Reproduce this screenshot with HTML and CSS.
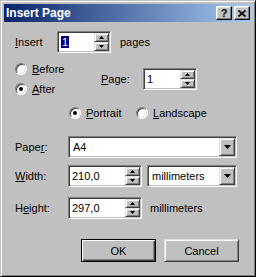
FILE: index.html
```html
<!DOCTYPE html>
<html lang="en">
<head>
    <meta charset="UTF-8">
    <title>Insert Page</title>
    <link rel="stylesheet" href="styles.css">
</head>
<body>
    <div class="window">
        <div class="titlebar">
            <span class="title">Insert Page</span>
            <div class="caption-buttons">
                <span class="cap-btn help">?</span>
                <span class="cap-btn close">
                    <svg width="8" height="7" viewBox="0 0 8 7"><path d="M0.5 0.5 L7.5 6.5 M7.5 0.5 L0.5 6.5" stroke="#000" stroke-width="1.6"/></svg>
                </span>
            </div>
        </div>

        <div class="client">
            <div class="row row-insert">
                <span class="label label-insert"><u>I</u>nsert</span>
                <div class="field spin small">
                    <span class="value"><span class="selected">1</span></span>
                    <div class="spinner">
                        <span class="spin-btn"><svg width="5" height="3" viewBox="0 0 5 3"><path d="M2.5 0 L5 3 L0 3 Z" fill="#000"/></svg></span>
                        <span class="spin-btn"><svg width="5" height="3" viewBox="0 0 5 3"><path d="M0 0 L5 0 L2.5 3 Z" fill="#000"/></svg></span>
                    </div>
                </div>
                <span class="unit-text pages">pages</span>
            </div>

            <div class="row row-position">
                <div class="radio-group">
                    <div class="radio-item"><span class="radio"></span><span><u>B</u>efore</span></div>
                    <div class="radio-item"><span class="radio checked"></span><span><u>A</u>fter</span></div>
                </div>
                <span class="label label-page"><u>P</u>age:</span>
                <div class="field spin small">
                    <span class="value">1</span>
                    <div class="spinner">
                        <span class="spin-btn"><svg width="5" height="3" viewBox="0 0 5 3"><path d="M2.5 0 L5 3 L0 3 Z" fill="#000"/></svg></span>
                        <span class="spin-btn"><svg width="5" height="3" viewBox="0 0 5 3"><path d="M0 0 L5 0 L2.5 3 Z" fill="#000"/></svg></span>
                    </div>
                </div>
            </div>

            <div class="row row-orientation">
                <div class="radio-item portrait"><span class="radio checked"></span><span><u>P</u>ortrait</span></div>
                <div class="radio-item"><span class="radio"></span><span><u>L</u>andscape</span></div>
            </div>

            <div class="row row-paper">
                <span class="label label-wide">Pape<u>r</u>:</span>
                <div class="field combo paper">
                    <span class="value">A4</span>
                    <span class="drop-btn"><svg width="7" height="4" viewBox="0 0 7 4"><path d="M0 0 L7 0 L3.5 4 Z" fill="#000"/></svg></span>
                </div>
            </div>

            <div class="row row-width">
                <span class="label label-wide"><u>W</u>idth:</span>
                <div class="field spin medium">
                    <span class="value">210,0</span>
                    <div class="spinner">
                        <span class="spin-btn"><svg width="5" height="3" viewBox="0 0 5 3"><path d="M2.5 0 L5 3 L0 3 Z" fill="#000"/></svg></span>
                        <span class="spin-btn"><svg width="5" height="3" viewBox="0 0 5 3"><path d="M0 0 L5 0 L2.5 3 Z" fill="#000"/></svg></span>
                    </div>
                </div>
                <div class="field combo units">
                    <span class="value">millimeters</span>
                    <span class="drop-btn"><svg width="7" height="4" viewBox="0 0 7 4"><path d="M0 0 L7 0 L3.5 4 Z" fill="#000"/></svg></span>
                </div>
            </div>

            <div class="row row-height">
                <span class="label label-wide">H<u>e</u>ight:</span>
                <div class="field spin medium">
                    <span class="value">297,0</span>
                    <div class="spinner">
                        <span class="spin-btn"><svg width="5" height="3" viewBox="0 0 5 3"><path d="M2.5 0 L5 3 L0 3 Z" fill="#000"/></svg></span>
                        <span class="spin-btn"><svg width="5" height="3" viewBox="0 0 5 3"><path d="M0 0 L5 0 L2.5 3 Z" fill="#000"/></svg></span>
                    </div>
                </div>
                <span class="unit-text">millimeters</span>
            </div>

            <div class="row row-buttons">
                <button class="btn default">OK</button>
                <button class="btn">Cancel</button>
            </div>
        </div>
    </div>
</body>
</html>
```

FILE: styles.css
```css
:root {
    --face: #c0c0c0;
    --light: #dfdfdf;
    --shadow: #808080;
    --dark: #404040;
    --highlight: #000080;
}

* {
    margin: 0;
    padding: 0;
    box-sizing: border-box;
}

body {
    margin: 0;
    width: 256px;
    height: 277px;
    font-family: 'Liberation Sans', Arial, sans-serif;
    font-size: 11px;
    color: #000;
    background: var(--face);
}

u {
    text-decoration: underline;
    text-underline-offset: 1px;
}

.window {
    width: 256px;
    height: 277px;
    padding: 3px;
    background: var(--face);
    border: 1px solid;
    border-color: var(--face) #000 #000 var(--face);
    box-shadow: inset 1px 1px #fff, inset -1px -1px var(--shadow);
}

/* title bar */
.titlebar {
    height: 18px;
    display: flex;
    align-items: center;
    justify-content: space-between;
    padding: 0 2px;
    background: linear-gradient(to right, #0a246a, #a6caf0);
}

.title {
    color: #fff;
    font-weight: bold;
    font-size: 12px;
}

.caption-buttons {
    display: flex;
    gap: 2px;
}

.cap-btn {
    width: 16px;
    height: 14px;
    display: flex;
    align-items: center;
    justify-content: center;
    background: var(--face);
    border: 1px solid;
    border-color: #fff #000 #000 #fff;
    box-shadow: inset -1px -1px var(--shadow), inset 1px 1px var(--light);
    font-weight: bold;
    font-size: 11px;
    line-height: 1;
}

/* client area */
.client {
    padding: 9px 0 0 11px;
}

.row {
    display: flex;
    align-items: center;
}

.label {
    flex: none;
}

.label-insert,
.label-page {
    width: 42px;
}

.label-wide {
    width: 53px;
}

.field {
    position: relative;
    height: 22px;
    display: flex;
    align-items: center;
    background: #fff;
    border: 1px solid;
    border-color: var(--shadow) #fff #fff var(--shadow);
    box-shadow: inset 1px 1px var(--dark), inset -1px -1px var(--face);
    padding: 2px;
}

.field .value {
    flex: 1;
    padding-left: 1px;
    line-height: 14px;
}

.selected {
    background: var(--highlight);
    color: #fff;
    padding: 0 1px;
}

.small {
    width: 54px;
}

.medium {
    width: 74px;
}

.spinner {
    display: flex;
    flex-direction: column;
    width: 15px;
    height: 18px;
    align-self: stretch;
    margin: -1px -1px -1px 0;
}

.spin-btn,
.drop-btn,
.btn {
    background: var(--face);
    border: 1px solid;
    border-color: var(--light) var(--dark) var(--dark) var(--light);
    box-shadow: inset 1px 1px #fff, inset -1px -1px var(--shadow);
}

.spin-btn {
    flex: 1;
    display: flex;
    align-items: center;
    justify-content: center;
}

.drop-btn {
    width: 16px;
    height: 18px;
    margin: -1px -1px -1px 0;
    display: flex;
    align-items: center;
    justify-content: center;
}

.combo .value {
    padding-left: 2px;
}

.paper {
    width: 169px;
}

.units {
    width: 90px;
    margin-left: 5px;
}

.unit-text {
    margin-left: 8px;
}

.pages {
    margin-left: 9px;
}

/* radios */
.radio-item {
    display: flex;
    align-items: center;
    gap: 5px;
    height: 16px;
}

.radio {
    width: 12px;
    height: 12px;
    border-radius: 50%;
    background: #fff;
    border: 1px solid;
    border-color: var(--shadow) #fff #fff var(--shadow);
    box-shadow: inset 1px 1px var(--dark), inset -1px -1px var(--light);
    display: flex;
    align-items: center;
    justify-content: center;
}

.radio.checked::after {
    content: '';
    width: 4px;
    height: 4px;
    border-radius: 50%;
    background: #000;
}

.row-position {
    margin-top: 8px;
}

.radio-group {
    width: 86px;
    display: flex;
    flex-direction: column;
    gap: 4px;
}

.row-orientation {
    margin-top: 8px;
    padding-left: 54px;
}

.portrait {
    width: 67px;
}

.row-paper {
    margin-top: 15px;
}

.row-width {
    margin-top: 7px;
}

.row-height {
    margin-top: 10px;
}

/* buttons */
.row-buttons {
    margin-top: 20px;
    padding-left: 66px;
    gap: 8px;
}

.btn {
    width: 75px;
    height: 23px;
    font-family: 'Liberation Sans', Arial, sans-serif;
    font-size: 11px;
    color: #000;
}

.btn.default {
    border: 1px solid #000;
    box-shadow: inset 1px 1px #fff, inset -1px -1px var(--dark), inset -2px -2px var(--shadow);
}
```
